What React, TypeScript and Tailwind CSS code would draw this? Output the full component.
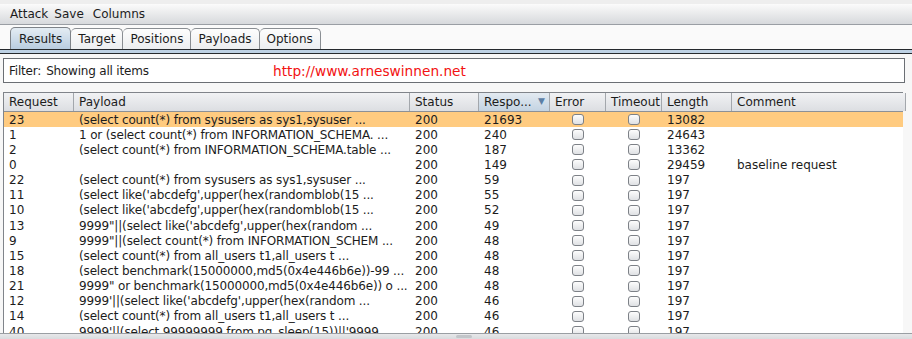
import React from 'react';

const COLS = [
  { key: 'req', label: 'Request', w: 70 },
  { key: 'payload', label: 'Payload', w: 336 },
  { key: 'status', label: 'Status', w: 69 },
  { key: 'resp', label: 'Respo...', w: 71 },
  { key: 'error', label: 'Error', w: 56 },
  { key: 'timeout', label: 'Timeout', w: 56 },
  { key: 'length', label: 'Length', w: 70 },
  { key: 'comment', label: 'Comment', w: 174 },
];

const ROWS = [
  ['23', '(select count(*) from sysusers as sys1,sysuser ...', '200', '21693', '13082', ''],
  ['1', '1 or (select count(*) from INFORMATION_SCHEMA. ...', '200', '240', '24643', ''],
  ['2', '(select count(*) from INFORMATION_SCHEMA.table ...', '200', '187', '13362', ''],
  ['0', '', '200', '149', '29459', 'baseline request'],
  ['22', '(select count(*) from sysusers as sys1,sysuser ...', '200', '59', '197', ''],
  ['11', "(select like('abcdefg',upper(hex(randomblob(15 ...", '200', '55', '197', ''],
  ['10', "(select like('abcdefg',upper(hex(randomblob(15 ...", '200', '52', '197', ''],
  ['13', "9999\"||(select like('abcdefg',upper(hex(random ...", '200', '49', '197', ''],
  ['9', '9999"||(select count(*) from INFORMATION_SCHEM ...', '200', '48', '197', ''],
  ['15', '(select count(*) from all_users t1,all_users t ...', '200', '48', '197', ''],
  ['18', '(select benchmark(15000000,md5(0x4e446b6e))-99 ...', '200', '48', '197', ''],
  ['21', '9999" or benchmark(15000000,md5(0x4e446b6e)) o ...', '200', '48', '197', ''],
  ['12', "9999'||(select like('abcdefg',upper(hex(random ...", '200', '46', '197', ''],
  ['14', '(select count(*) from all_users t1,all_users t ...', '200', '46', '197', ''],
  ['40', "9999'||(select 99999999 from pg_sleep(15))||'9999 ...", '200', '46', '197', ''],
];

const TABS = ['Results', 'Target', 'Positions', 'Payloads', 'Options'];

function Check() {
  return (
    <span className="block w-[12px] h-[11px] rounded-[3px] border border-[#7d8187] bg-gradient-to-b from-[#fdfdfd] to-[#dfe1e4]" />
  );
}

export default function App() {
  return (
    <div
      className="w-[912px] h-[339px] overflow-hidden bg-[#f7f7f7] text-[12px] text-[#1c1c1c] flex flex-col"
      style={{ fontFamily: '"DejaVu Sans", Verdana, sans-serif' }}
    >
      {/* top strip */}
      <div className="h-[4px] bg-[#eeeeee] shrink-0" />

      {/* menu bar */}
      <div className="h-[21px] shrink-0 flex items-center gap-[6px] pl-[10px] bg-gradient-to-b from-[#fbfbfb] to-[#d7d9dc] border-b border-[#9a9ea4]">
        <span>Attack</span>
        <span>Save</span>
        <span className="ml-[3px]">Columns</span>
      </div>

      {/* tabs */}
      <div className="h-[24px] shrink-0 flex items-end pl-[10px] bg-[#fafafa]">
        {TABS.map((t, i) => (
          <div
            key={t}
            className={
              i === 0
                ? 'h-[22px] px-[8px] flex items-center rounded-t-[5px] border border-b-0 border-[#7e8389] bg-gradient-to-b from-[#e4ecf3] to-[#b9cde0]'
                : 'h-[21px] px-[7px] flex items-center rounded-t-[5px] border border-b-0 border-l-0 border-[#8a8e93] bg-gradient-to-b from-[#fdfdfd] to-[#eceef0]'
            }
          >
            {t}
          </div>
        ))}
      </div>
      <div className="h-[5px] shrink-0 border-y border-[#25292d] bg-[#bdd1e4]" />

      {/* content */}
      <div className="flex-1 flex flex-col px-[3px] pt-[4px] bg-[#f7f7f7] min-h-0">
        <div className="h-[25px] shrink-0 mr-[4px] border border-[#6b6f74] bg-white flex items-center pl-[5px] relative">
          <span className="tracking-[-0.2px]">Filter:</span>
          <span className="ml-[5px] tracking-[-0.2px]">Showing all items</span>
          <span className="absolute left-[269px] top-[6px] text-[13.7px] text-[#f21212] leading-none">
            http://www.arneswinnen.net
          </span>
        </div>

        <div className="mt-[9px] flex-1 min-h-0 flex flex-col border-l border-t border-[#80848a] bg-white mr-[6px] relative">
          {/* header */}
          <div className="h-[19px] shrink-0 flex border-b border-[#8c9096]">
            {COLS.map((c, i) => (
              <div
                key={c.key}
                style={{ width: c.w }}
                className={
                  'shrink-0 flex items-center pl-[5px] border-r border-[#a3a7ac] ' +
                  (i === 3
                    ? 'bg-gradient-to-b from-[#e3eaf1] to-[#c3d3e2]'
                    : 'bg-gradient-to-b from-[#f1f2f4] to-[#dcdee2]')
                }
              >
                <span>{c.label}</span>
                {i === 3 && <span className="ml-auto mr-[4px] text-[9px] text-[#5d7fa5]">▼</span>}
              </div>
            ))}
          </div>

          {/* rows */}
          <div className="flex-1 min-h-0 overflow-hidden">
            {ROWS.map((r, ri) => (
              <div
                key={ri}
                className={'h-[15.15px] flex items-center ' + (ri === 0 ? 'bg-[#ffcb80]' : '')}
              >
                <div style={{ width: 70 }} className="shrink-0 pl-[5px] whitespace-nowrap">{r[0]}</div>
                <div style={{ width: 336 }} className="shrink-0 pl-[5px] whitespace-nowrap tracking-[-0.15px]">{r[1]}</div>
                <div style={{ width: 69 }} className="shrink-0 pl-[5px]">{r[2]}</div>
                <div style={{ width: 71 }} className="shrink-0 pl-[5px]">{r[3]}</div>
                <div style={{ width: 56 }} className="shrink-0 flex justify-center"><Check /></div>
                <div style={{ width: 56 }} className="shrink-0 flex justify-center"><Check /></div>
                <div style={{ width: 70 }} className="shrink-0 pl-[5px]">{r[4]}</div>
                <div style={{ width: 174 }} className="shrink-0 pl-[5px] whitespace-nowrap">{r[5]}</div>
              </div>
            ))}
          </div>
        </div>
      </div>

      {/* horizontal scrollbar */}
      <div className="h-[6px] shrink-0 bg-gradient-to-b from-[#e7e8ea] to-[#d9dbde] border-t border-[#9a9ea3] flex justify-center">
        <div className="w-[16px] h-[3px] mt-[1px] ml-[15px] rounded-[2px] bg-[#c2c5c9]" />
      </div>
    </div>
  );
}
